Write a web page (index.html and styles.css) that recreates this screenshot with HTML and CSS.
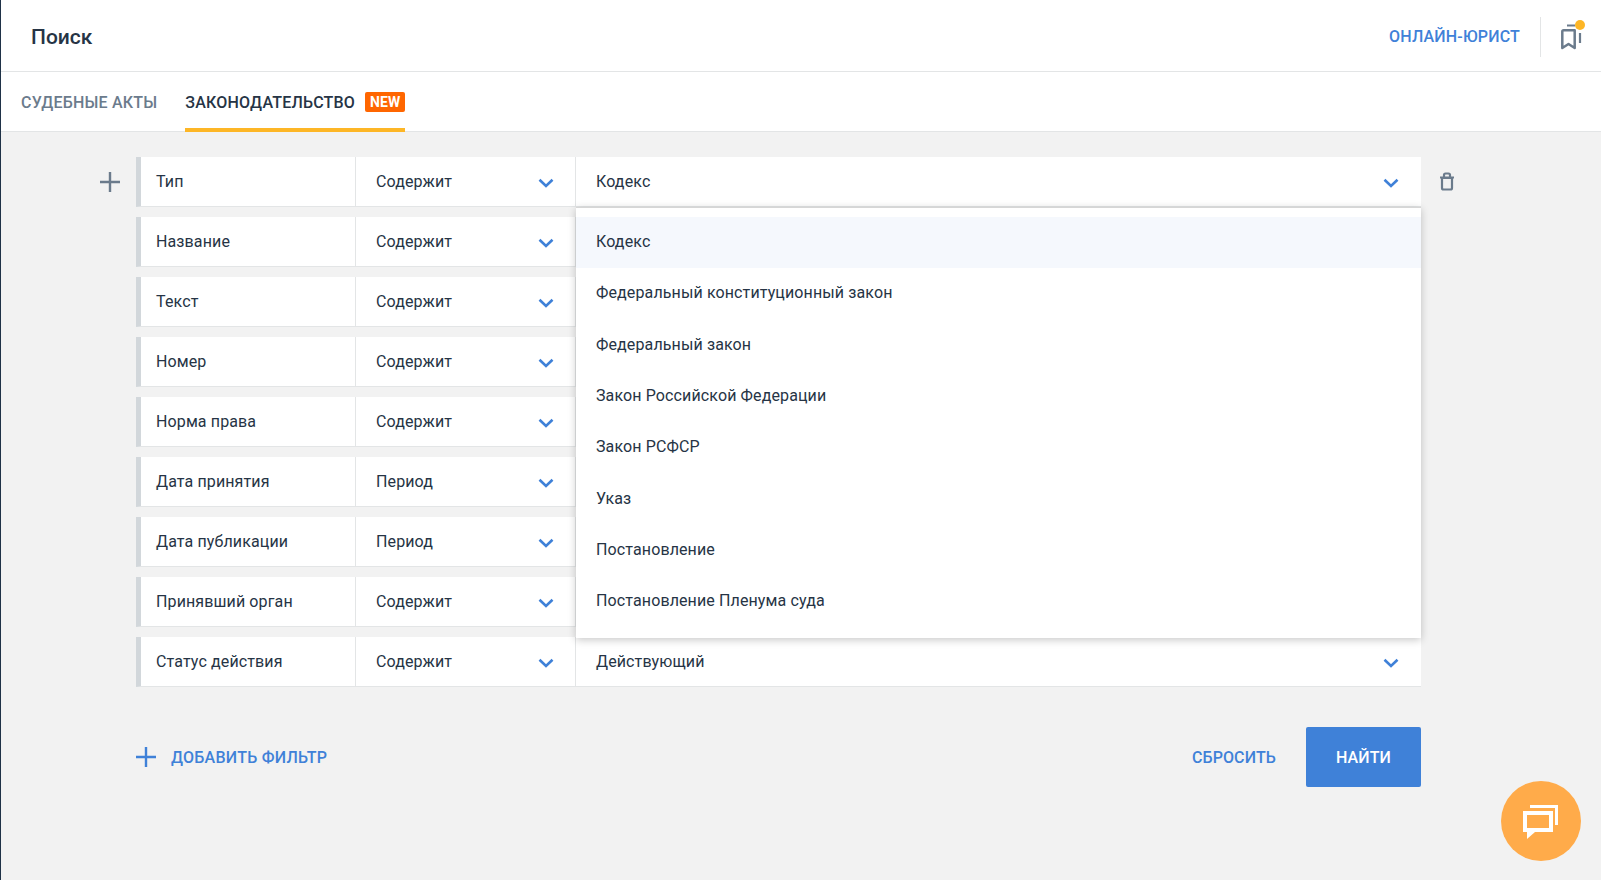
FILE: index.html
```html
<!DOCTYPE html>
<html lang="ru">
<head>
<meta charset="utf-8">
<title>Поиск</title>
<link rel="stylesheet" href="styles.css">
</head>
<body>
<svg class="sprite" width="0" height="0">
  <symbol id="chev" viewBox="0 0 16 10"><path d="M1.5 1.8 8 8l6.5-6.2" fill="none" stroke="currentColor" stroke-width="2.6"/></symbol>
</svg>
<div class="app">
  <header class="top">
    <h1 class="title">Поиск</h1>
    <div class="top-right">
      <a class="lawyer">ОНЛАЙН-ЮРИСТ</a>
      <span class="top-sep"></span>
      <span class="bookmarks">
        <svg width="22" height="30" viewBox="0 0 22 30"><path d="M1.300 26V9.500Q1.300 8.200 2.600 8.200H13.700V26L7.500 22Z" fill="none" stroke="#6b7b8c" stroke-width="2.500" stroke-linejoin="round"/><path d="M6 3.500H14" stroke="#6b7b8c" stroke-width="2"/><path d="M19 11V21" stroke="#6b7b8c" stroke-width="2.200"/></svg>
        <span class="dot"></span>
      </span>
    </div>
  </header>
  <nav class="tabs">
    <a class="tab">СУДЕБНЫЕ АКТЫ</a>
    <a class="tab active">ЗАКОНОДАТЕЛЬСТВО <span class="new">NEW</span></a>
  </nav>
  <main class="content">
    <div class="filters">
      <button class="add-row" aria-label="Добавить"><svg width="20" height="20" viewBox="0 0 20 20"><path d="M10 0V20M0 10H20" stroke="#6b7b8c" stroke-width="2.400"/></svg></button>
      <button class="del-row" aria-label="Удалить"><svg width="16" height="19" viewBox="0 0 16 19"><path d="M3 6H13V16Q13 17.500 11.500 17.500H4.500Q3 17.500 3 16ZM1 5.500H15M5 5V3Q5 1.500 6.500 1.500H9.500Q11 1.500 11 3V5" fill="none" stroke="#6b7b8c" stroke-width="2.200"/></svg></button>
      <div class="row"><div class="c1">Тип</div><div class="c2">Содержит<svg class="chev"><use href="#chev"/></svg></div><div class="c3">Кодекс<svg class="chev"><use href="#chev"/></svg></div></div>
      <div class="row"><div class="c1">Название</div><div class="c2">Содержит<svg class="chev"><use href="#chev"/></svg></div><div class="c3"></div></div>
      <div class="row"><div class="c1">Текст</div><div class="c2">Содержит<svg class="chev"><use href="#chev"/></svg></div><div class="c3"></div></div>
      <div class="row"><div class="c1">Номер</div><div class="c2">Содержит<svg class="chev"><use href="#chev"/></svg></div><div class="c3"></div></div>
      <div class="row"><div class="c1">Норма права</div><div class="c2">Содержит<svg class="chev"><use href="#chev"/></svg></div><div class="c3"></div></div>
      <div class="row"><div class="c1">Дата принятия</div><div class="c2">Период<svg class="chev"><use href="#chev"/></svg></div><div class="c3"></div></div>
      <div class="row"><div class="c1">Дата публикации</div><div class="c2">Период<svg class="chev"><use href="#chev"/></svg></div><div class="c3"></div></div>
      <div class="row"><div class="c1">Принявший орган</div><div class="c2">Содержит<svg class="chev"><use href="#chev"/></svg></div><div class="c3"></div></div>
      <div class="row"><div class="c1">Статус действия</div><div class="c2">Содержит<svg class="chev"><use href="#chev"/></svg></div><div class="c3">Действующий<svg class="chev"><use href="#chev"/></svg></div></div>
      <ul class="menu">
        <li class="selected">Кодекс</li>
        <li>Федеральный конституционный закон</li>
        <li>Федеральный закон</li>
        <li>Закон Российской Федерации</li>
        <li>Закон РСФСР</li>
        <li>Указ</li>
        <li>Постановление</li>
        <li>Постановление Пленума суда</li>
      </ul>
    </div>
    <div class="actions">
      <a class="add-filter"><svg width="20" height="20" viewBox="0 0 20 20"><path d="M10 0V20M0 10H20" stroke="#3f81d8" stroke-width="2.400"/></svg>ДОБАВИТЬ ФИЛЬТР</a>
      <div class="actions-right">
        <a class="reset">СБРОСИТЬ</a>
        <button class="find">НАЙТИ</button>
      </div>
    </div>
  </main>
  <button class="chat" aria-label="Чат"><svg width="36" height="36" viewBox="0 0 36 36"><path d="M7 3.500H33.500V22" fill="none" stroke="#fff" stroke-width="3"/><rect x="2" y="10" width="26" height="17" fill="none" stroke="#fff" stroke-width="4"/><path d="M4 29V36L12 29Z" fill="#fff"/></svg></button>
</div>
</body>
</html>
```
FILE: styles.css
```css
* { box-sizing: border-box; }
html, body { margin: 0; height: 100%; }
body { font-family: Roboto, "Liberation Sans", sans-serif; font-size: 16px; letter-spacing: .12px; color: #263445; overflow: hidden; }
.sprite { position: absolute; }
.app { position: relative; height: 880px; background: #f2f2f2; border-left: 1px solid #1f3247; display: flex; flex-direction: column; }
.top { height: 72px; flex: none; background: #fff; border-bottom: 1px solid #e3e5e6; display: flex; align-items: center; justify-content: space-between; padding: 3px 18px 0 30px; }
.title { margin: -1px 0 0; font-size: 21px; font-weight: 500; letter-spacing: 0; color: #263445; }
.top-right { display: flex; align-items: center; }
.lawyer { margin-top: -2px; color: #3f81d8; font-weight: 500; font-size: 16px; letter-spacing: .17px; }
.top-sep { width: 1px; height: 40px; background: #e3e5e6; margin: 0 20px; }
.bookmarks { position: relative; width: 22px; height: 30px; display: block; }
.bookmarks svg { display: block; }
.dot { position: absolute; left: 14px; top: -2px; width: 10px; height: 10px; border-radius: 50%; background: #fdb626; }
.tabs { height: 60px; flex: none; background: #fff; border-bottom: 1px solid #e3e5e6; display: flex; gap: 28px; padding-left: 20px; }
.tab { height: 60px; display: flex; align-items: center; padding-top: 1px; font-weight: 500; letter-spacing: .2px; color: #6b7b8c; }
.tab.active { color: #263445; border-bottom: 4px solid #fdb626; padding-top: 5px; gap: 10px; }
.new { margin-top: -1px; background: #ff6600; color: #fff; font-size: 14px; font-weight: 700; letter-spacing: .12px; line-height: 20px; height: 20px; padding: 0 5px; border-radius: 2px; }
.content { flex: 1; padding: 25px 180px 0 135px; }
.filters { position: relative; display: flex; flex-direction: column; gap: 10px; }
.row { height: 50px; display: flex; background: #fff; border-left: 5px solid #d2d7db; border-bottom: 1px solid #e3e5e6; align-items: stretch; }
.c1 { width: 215px; flex: none; display: flex; align-items: center; padding-left: 15px; border-right: 1px solid #e3e5e6; }
.c2 { width: 220px; flex: none; display: flex; align-items: center; justify-content: space-between; padding: 0 21px 0 20px; border-right: 1px solid #e3e5e6; }
.c3 { flex: 1; display: flex; align-items: center; justify-content: space-between; padding: 0 22px 0 20px; }
.chev { width: 16px; height: 10px; color: #3f81d8; flex: none; margin-top: 3px; }
.add-row { position: absolute; left: -36px; top: 15px; width: 20px; height: 20px; padding: 0; border: 0; background: none; }
.del-row { position: absolute; right: -34px; top: 15px; width: 16px; height: 19px; padding: 0; border: 0; background: none; }
.add-row svg, .del-row svg { display: block; }
.menu { position: absolute; left: 440px; right: 0; top: 50px; height: 431px; margin: 0; padding: 9px 0 0; list-style: none; background: #fff; border-top: 1px solid #d6d6d6; box-shadow: 0 2px 8px rgba(0,0,0,.22); }
.menu li { height: 51.300px; padding: 0 0 2px 20px; display: flex; align-items: center; }
.menu .selected { background: #f5f8fd; }
.actions { display: flex; justify-content: space-between; align-items: center; margin-top: 40px; }
.add-filter { display: flex; align-items: center; gap: 15px; color: #3f81d8; font-weight: 500; letter-spacing: .25px; }
.actions-right { display: flex; align-items: center; gap: 30px; }
.reset { color: #3f81d8; font-weight: 500; }
.find { width: 115px; height: 60px; border: 0; border-radius: 2px; background: #3f81d8; color: #fff; font: 500 16px Roboto, "Liberation Sans", sans-serif; letter-spacing: .12px; }
.chat { position: absolute; left: 1500px; top: 781px; width: 80px; height: 80px; border: 0; border-radius: 50%; background: #ffab4a; padding: 0; display: flex; align-items: center; justify-content: center; }
```
